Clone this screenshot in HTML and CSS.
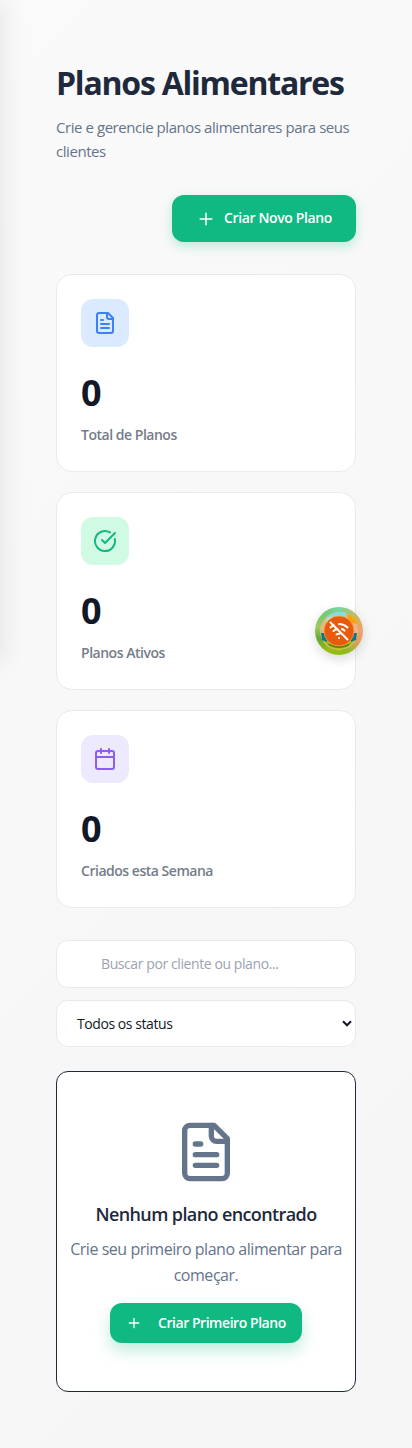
FILE: index.html
```html
<!DOCTYPE html>
<html lang="pt-BR">
<head>
<meta charset="utf-8">
<meta name="viewport" content="width=device-width, initial-scale=1">
<title>Planos Alimentares</title>
<link rel="stylesheet" href="styles.css">
</head>
<body>
<svg class="sprite" aria-hidden="true">
  <symbol id="file-text" viewBox="0 0 24 24"><path d="M15 2H6a2 2 0 0 0-2 2v16a2 2 0 0 0 2 2h12a2 2 0 0 0 2-2V7Z"/><path d="M14 2v4a2 2 0 0 0 2 2h4M10 9H8M16 13H8M16 17H8"/></symbol>
  <symbol id="check" viewBox="0 0 24 24"><path d="M21.801 10A10 10 0 1 1 17 3.335"/><path d="m9 11 3 3L22 4"/></symbol>
  <symbol id="calendar" viewBox="0 0 24 24"><path d="M8 2v4M16 2v4M3 10h18"/><rect x="3" y="4" width="18" height="18" rx="2"/></symbol>
  <symbol id="plus" viewBox="0 0 24 24"><path d="M5 12h14M12 5v14"/></symbol>
</svg>
<aside class="sidebar"></aside>
<main class="page">
  <header class="header">
    <h1 class="title">Planos Alimentares</h1>
    <p class="subtitle">Crie e gerencie planos alimentares para seus clientes</p>
  </header>
  <div class="actions">
    <button class="button button-new"><svg class="icon"><use href="#plus"/></svg><span>Criar Novo Plano</span></button>
  </div>
  <section class="stats">
    <article class="stat">
      <div class="tile tile-blue"><svg class="icon"><use href="#file-text"/></svg></div>
      <div class="value">0</div>
      <div class="label">Total de Planos</div>
    </article>
    <article class="stat">
      <div class="tile tile-green"><svg class="icon"><use href="#check"/></svg></div>
      <div class="value">0</div>
      <div class="label">Planos Ativos</div>
    </article>
    <article class="stat">
      <div class="tile tile-purple"><svg class="icon"><use href="#calendar"/></svg></div>
      <div class="value">0</div>
      <div class="label">Criados esta Semana</div>
    </article>
  </section>
  <section class="filters">
    <input class="search" type="text" placeholder="Buscar por cliente ou plano...">
    <div class="select"><span>Todos os status</span><svg class="chevron" viewBox="0 0 10 8"><path d="M1 1.3 5 5.3 9 1.3"/></svg></div>
  </section>
  <section class="empty">
    <svg class="icon empty-icon"><use href="#file-text"/></svg>
    <h3 class="empty-title">Nenhum plano encontrado</h3>
    <p class="empty-text">Crie seu primeiro plano alimentar para começar.</p>
    <button class="button button-first"><svg class="icon"><use href="#plus"/></svg><span>Criar Primeiro Plano</span></button>
  </section>
</main>
<div class="offline">
  <svg class="offline-art" viewBox="0 0 48 48">
    <circle cx="24" cy="24" r="19" fill="#f5b58c" opacity=".8"/>
    <path d="M11 12a18 18 0 0 1 20-6l1 7H12z" fill="#86dde6"/>
    <path d="M12 11q11-4 21 0l2 4H11z" fill="#c9dfb8"/>
    <path d="M32 7q8 3 10 10l-9-2z" fill="#ff9f0a"/>
    <path d="M7 30h34a18 18 0 0 1-34 0z" fill="#a4c80b"/>
    <path d="M6 26h4l3 5-1 4-5-2zM42 26h-4l-3 5 1 4 5-2z" fill="#08798a"/>
    <path d="M12 36q12 6 24 0l-3 3q-9 4-18 0z" fill="#568019"/>
    <circle cx="24" cy="24" r="15" fill="#e85a0c" stroke="#f5a04f" stroke-width=".8"/>
    <g fill="none" stroke="#fff" stroke-width="2" stroke-linecap="round">
      <path d="m15.5 15.5 17 17M15.5 20.4q1.5-1.4 3.5-2M24 17.1q4.800 0 8.500 3.300M18.500 24q2-1.700 4-2M27 22q1.500.5 2.500 1.700M21.500 27.500q1.500-1 3-.8M24 31v.1"/>
    </g>
  </svg>
</div>
</body>
</html>
```
FILE: styles.css
```css
* { box-sizing: border-box; }

body {
  margin: 0;
  min-height: 1448px;
  overflow-x: hidden;
  background: linear-gradient(135deg, #fafafa 0%, #f5f5f5 100%);
  font-family: "Open Sans", "Noto Sans", sans-serif;
  color: #1e293b;
}

h1, h3, p { margin: 0; }

.sprite { position: absolute; width: 0; height: 0; }

.icon {
  display: block;
  flex: none;
  width: 24px;
  height: 24px;
  fill: none;
  stroke: currentColor;
  stroke-width: 2;
  stroke-linecap: round;
  stroke-linejoin: round;
}

/* Closed drawer: only its shadow reaches the page */
.sidebar {
  position: absolute;
  top: 0;
  left: -280px;
  width: 280px;
  height: 662px;
  box-shadow: 4px 0 24px rgba(0, 0, 0, 0.08);
}

.page { padding: 59px 56px 0; }

.header { height: 136px; }

.title {
  font-size: 32px;
  line-height: 48px;
  font-weight: 700;
  white-space: nowrap;
  letter-spacing: -1.23px;
}

.subtitle {
  margin-top: 8px;
  color: #64748b;
  font-size: 15px;
  line-height: 24px;
  letter-spacing: -0.44px;
}

.actions { display: flex; justify-content: flex-end; }

.button {
  display: flex;
  align-items: center;
  border: 0;
  border-radius: 12px;
  background: #10b981;
  color: #fff;
  font-family: inherit;
  font-size: 14px;
  font-weight: 600;
  white-space: nowrap;
}

.button span { padding-bottom: 2px; }

.button-new {
  width: 184px;
  height: 47px;
  padding: 0 24px;
  gap: 8px;
  letter-spacing: -0.37px;
  box-shadow: 0 4px 12px rgba(16, 185, 129, 0.25);
}

.button-new .icon { width: 20px; height: 20px; stroke-width: 1.8; }

.stats { display: grid; gap: 20px; margin-top: 32px; }

.stat {
  height: 198px;
  padding: 24px;
  border: 1px solid #e9eaec;
  border-radius: 16px;
  background: #fff;
}

.tile {
  display: grid;
  place-items: center;
  width: 48px;
  height: 48px;
  border-radius: 12px;
}

.tile-blue { background: #dbeafe; color: #3b82f6; }
.tile-green { background: #d1fae5; color: #10b981; }
.tile-purple { background: #ede9fe; color: #8b5cf6; }

.value {
  margin-top: 26px;
  font-size: 36px;
  line-height: 40px;
  font-weight: 700;
  color: #111827;
}

.label {
  margin-top: 12px;
  font-size: 14px;
  line-height: 20px;
  font-weight: 600;
  color: #757c89;
  letter-spacing: -0.48px;
}

.filters { display: grid; gap: 12px; margin-top: 32px; }

.search, .select {
  width: 100%;
  border: 1px solid #e8e9ec;
  border-radius: 12px;
  background: #fff;
  color: #111827;
  font-family: inherit;
  font-size: 14px;
}

.search { height: 48px; padding: 0 16px 1px 44px; letter-spacing: -0.41px; }
.search::placeholder { color: #9ca3af; opacity: 1; }

.select {
  display: flex;
  align-items: center;
  justify-content: space-between;
  height: 47px;
  padding: 0 3px 0 20px;
  letter-spacing: -0.43px;
}

.chevron { width: 10px; height: 8px; fill: none; stroke: #111827; stroke-width: 2; }

.empty {
  display: flex;
  flex-direction: column;
  align-items: center;
  height: 321px;
  margin-top: 24px;
  padding-top: 48px;
  border: 1px solid #1e293b;
  border-radius: 12px;
  background: #fff;
  text-align: center;
}

.empty-icon { width: 64px; height: 64px; color: #64748b; }

.empty-title {
  margin-top: 16px;
  font-size: 18px;
  line-height: 29px;
  font-weight: 600;
  letter-spacing: -0.61px;
}

.empty-text {
  width: 284px;
  margin-top: 7px;
  color: #64748b;
  font-size: 16px;
  line-height: 26px;
  letter-spacing: -0.46px;
}

.button-first {
  width: 192px;
  height: 40px;
  margin-top: 15px;
  padding: 0 16px;
  gap: 16px;
  letter-spacing: -0.45px;
  box-shadow: 0 8px 16px rgba(16, 185, 129, 0.25);
}

.button-first .icon { width: 16px; height: 16px; }

.offline {
  position: absolute;
  left: 315px;
  top: 607px;
  width: 48px;
  height: 48px;
  border-radius: 50%;
  background: conic-gradient(#79d5a0, #c8b955 50deg, #f3a071 90deg, #dc9e62 120deg, #8bbd18 160deg, #9cbc12 210deg, #61a936 250deg, #a1c758 280deg, #71cc72 320deg, #79d5a0);
  box-shadow: 0 4px 12px rgba(0, 0, 0, 0.15);
}

.offline-art { display: block; width: 48px; height: 48px; }
```
